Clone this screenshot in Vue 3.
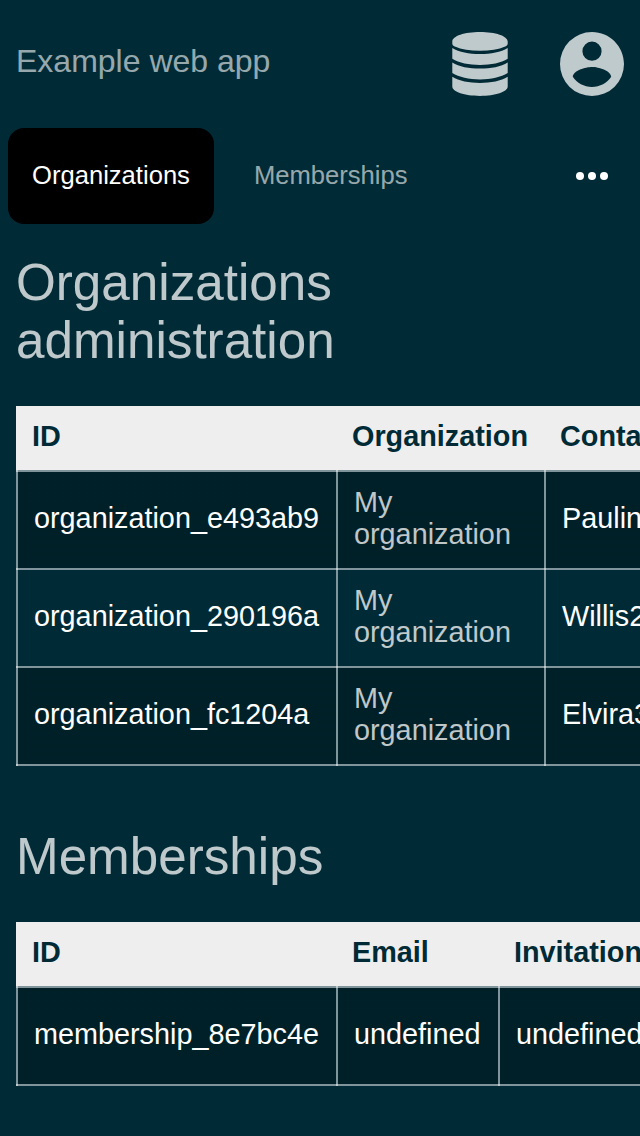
<script setup>
const tables = [
  {
    title: 'Organizations administration',
    cols: [320, 208, 300],
    head: ['ID', 'Organization', 'Contact'],
    rows: [
      ['organization_e493ab9', 'My organization', 'Pauline'],
      ['organization_290196a', 'My organization', 'Willis2'],
      ['organization_fc1204a', 'My organization', 'Elvira3'],
    ],
    mutedColumn: 1,
  },
  {
    title: 'Memberships',
    cols: [320, 162, 300],
    head: ['ID', 'Email', 'Invitation'],
    rows: [['membership_8e7bc4e', 'undefined', 'undefined']],
    mutedColumn: -1,
  },
]
</script>

<template>
  <div class="app">
    <header class="topbar">
      <span class="brand">Example web app</span>
      <div class="actions">
        <svg class="icon" viewBox="0 0 64 64">
          <path d="M32 0C47.3 0 59.7 4 59.7 9.6V11.6C59.7 13 58.8 13.9 57.2 14.5C50.5 17.4 42 18.8 32 18.8S13.500 17.4 6.800 14.500C5.200 13.900 4.300 13 4.300 11.600V9.600C4.300 4 16.700 0 32 0Z" />
          <path d="M4.3 16C11 20 21 22 32 22S53 20 59.7 16V26.8C53 31 43 33 32 33S11 31 4.3 26.8Z" />
          <path d="M4.3 30.4C11 34.5 21 36.6 32 36.6S53 34.5 59.7 30.4V41.1C53 45.3 43 47.4 32 47.4S11 45.3 4.3 41.1Z" />
          <path d="M4.3 44.8C11 48.9 21 51 32 51S53 48.9 59.7 44.8V54.6C59.7 59.8 47.3 64 32 64S4.3 59.8 4.3 54.6Z" />
        </svg>
        <svg class="icon" viewBox="2 2 20 20">
          <path d="M12,19.2C9.5,19.2 7.29,17.92 6,16C6.03,14 10,12.9 12,12.9C14,12.9 17.97,14 18,16C16.71,17.92 14.5,19.2 12,19.2M12,5A3,3 0 0,1 15,8A3,3 0 0,1 12,11A3,3 0 0,1 9,8A3,3 0 0,1 12,5M12,2A10,10 0 0,0 2,12A10,10 0 0,0 12,22A10,10 0 0,0 22,12C22,6.47 17.5,2 12,2Z" />
        </svg>
      </div>
    </header>
    <nav class="tabs">
      <a class="tab active">Organizations</a>
      <a class="tab">Memberships</a>
      <svg class="more" viewBox="0 0 32 8">
        <circle cx="4" cy="4" r="4" />
        <circle cx="16" cy="4" r="4" />
        <circle cx="28" cy="4" r="4" />
      </svg>
    </nav>
    <main>
      <section v-for="t in tables" :key="t.title">
        <h1>{{ t.title }}</h1>
        <div class="table" role="table">
          <div class="row head" role="row">
            <div v-for="(h, i) in t.head" :key="h" class="th" role="columnheader" :style="{ width: t.cols[i] + 'px' }">{{ h }}</div>
          </div>
          <div v-for="r in t.rows" :key="r[0]" class="row body" role="row">
            <div
              v-for="(c, i) in r"
              :key="i"
              class="td"
              role="cell"
              :class="{ muted: i === t.mutedColumn }"
              :style="{ width: t.cols[i] + 'px' }"
            >{{ c }}</div>
          </div>
        </div>
      </section>
    </main>
  </div>
</template>

<style>
body {
  background: #002b36;
}
</style>

<style scoped>
.app {
  box-sizing: border-box;
  width: 640px;
  height: 1136px;
  overflow: hidden;
  background: #002b36;
  color: #fff;
  font-family: 'Liberation Sans', Arial, sans-serif;
}
.topbar {
  display: flex;
  align-items: center;
  justify-content: space-between;
  box-sizing: border-box;
  height: 128px;
  padding: 0 16px;
}
.brand {
  margin-top: -6px;
  font-size: 32px;
  color: rgba(255, 255, 255, 0.6);
}
.actions {
  display: flex;
  gap: 48px;
}
.icon {
  display: block;
  width: 64px;
  height: 64px;
  fill: #bfcacd;
}
.tabs {
  display: flex;
  align-items: center;
  height: 96px;
  padding: 0 32px 0 8px;
  font-size: 25.6px;
}
.tab {
  height: 96px;
  padding: 0 24px;
  margin-right: 16px;
  border-radius: 16px;
  line-height: 94px;
  color: rgba(255, 255, 255, 0.6);
}
.tab.active {
  background: #000;
  color: #fff;
}
.more {
  width: 32px;
  height: 8px;
  margin-left: auto;
  fill: #fff;
}
main {
  padding: 30px 16px 0;
}
h1 {
  width: 480px;
  margin: 0 0 36px;
  font-size: 51.2px;
  font-weight: 400;
  line-height: 58px;
  color: rgba(255, 255, 255, 0.75);
}
section + section {
  margin-top: 62px;
}
.table {
  width: max-content;
  font-size: 28.8px;
  line-height: 32px;
}
.row {
  display: flex;
}
.th,
.td {
  box-sizing: border-box;
  flex: none;
}
.th {
  height: 64px;
  padding: 14px 16px 18px;
  background: #eee;
  color: #002b36;
  font-weight: 700;
}
.row.body {
  box-sizing: border-box;
  height: 98px;
  border-top: 2px solid rgba(255, 255, 255, 0.5);
}
.row.body:last-child {
  height: 100px;
  border-bottom: 2px solid rgba(255, 255, 255, 0.5);
}
/* Cells reach over the row rules so that crossings are brighter. */
.td {
  display: flex;
  align-items: center;
  margin-top: -2px;
  padding: 16px 16px 18px;
  border-left: 2px solid rgba(255, 255, 255, 0.5);
}
.row.body:last-child .td {
  margin-bottom: -2px;
  padding-bottom: 20px;
}
.row.body:nth-child(even) .td {
  background: linear-gradient(rgba(0, 0, 0, 0.25), rgba(0, 0, 0, 0.25)) 0 2px / 100% 96px no-repeat padding-box;
}
.muted {
  color: rgba(255, 255, 255, 0.75);
}
</style>
